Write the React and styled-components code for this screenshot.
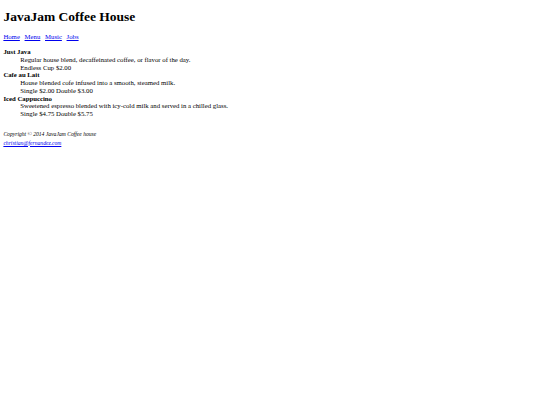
import React from "react";
import styled, { createGlobalStyle } from "styled-components";

const Global = createGlobalStyle`
  html {
    background: #ffffff;
  }
  body {
    margin: 3.375px;
    font-family: "Liberation Serif", "Times New Roman", serif;
    font-size: 6.75px;
    line-height: 7.76px;
    color: #000000;
  }
`;

const Title = styled.h1`
  font-size: 13.5px;
  line-height: 15.53px;
  font-weight: bold;
  margin: 5.5px 0 9.05px;
`;

const Nav = styled.nav`
  display: block;
`;

const NavLink = styled.a`
  color: #0000ee;
  text-decoration: underline;
  margin-right: ${(p) => (p.$last ? "0" : "4.7px")};
`;

const MenuList = styled.dl`
  margin: 6.75px 0;
`;

const Item = styled.dt`
  font-weight: bold;
`;

const Detail = styled.dd`
  margin-left: 16.875px;
`;

const Footer = styled.footer`
  margin-top: 12px;
`;

const Copy = styled.small`
  font-size: 5.625px;
  font-style: italic;
`;

const Mail = styled.a`
  color: #0000ee;
  font-size: 5.625px;
  font-style: italic;
  text-decoration: underline;
`;

const items = [
  {
    name: "Just Java",
    desc: "Regular house blend, decaffeinated coffee, or flavor of the day.",
    price: "Endless Cup $2.00",
  },
  {
    name: "Cafe au Lait",
    desc: "House blended cofe infused into a smooth, steamed milk.",
    price: "Single $2.00 Double $3.00",
  },
  {
    name: "Iced Cappuccino",
    desc: "Sweetened espresso blended with icy-cold milk and served in a chilled glass.",
    price: "Single $4.75 Double $5.75",
  },
];

export default function App() {
  return (
    <>
      <Global />
      <Title>JavaJam Coffee House</Title>
      <Nav>
        <NavLink href="#">Home</NavLink>
        <NavLink href="#">Menu</NavLink>
        <NavLink href="#">Music</NavLink>
        <NavLink href="#" $last>Jobs</NavLink>
      </Nav>
      <MenuList>
        {items.map((it) => (
          <React.Fragment key={it.name}>
            <Item>{it.name}</Item>
            <Detail>{it.desc}</Detail>
            <Detail>{it.price}</Detail>
          </React.Fragment>
        ))}
      </MenuList>
      <Footer>
        <Copy>Copyright © 2014 JavaJam Coffee house</Copy>
        <br />
        <Mail href="#">christian@fernandez.com</Mail>
      </Footer>
    </>
  );
}
